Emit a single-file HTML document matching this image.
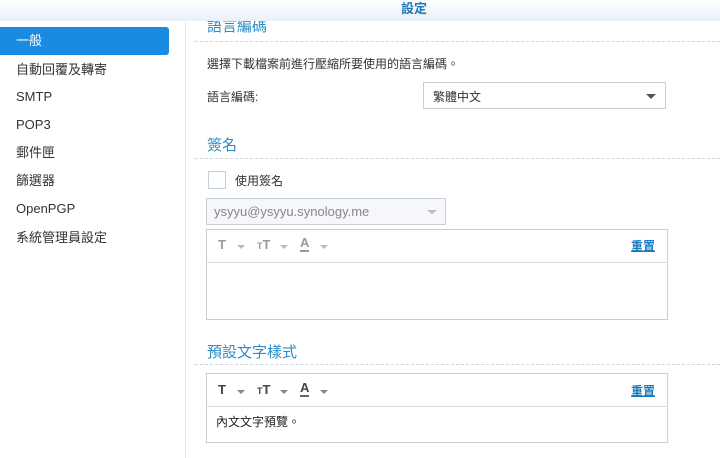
<!DOCTYPE html>
<html><head><meta charset="utf-8"><style>
*{margin:0;padding:0;box-sizing:border-box}
body{width:720px;height:458px;overflow:hidden;background:#fff;font-family:"Liberation Sans","Noto Sans CJK TC",sans-serif;font-size:13px;color:#333;position:relative}
.a{position:absolute;white-space:nowrap}
.hdr{left:0;top:0;width:720px;height:21px;background:linear-gradient(#fff,#e8f1f9);z-index:2}
.side{left:16px;font-size:13px;color:#333;line-height:16px}
.h{color:#2b8dc4;font-size:15px;left:207px}
.dash{left:195px;width:525px;border-top:1px dashed #ccd6de;height:0}
.box{border:1px solid #c7d0d8;background:#fff}
.tb{font-size:13px;color:#555;font-weight:bold}
.arr{width:0;height:0;border-left:4px solid transparent;border-right:4px solid transparent;border-top:4px solid #888}
.rst{color:#1a7cc0;font-size:12px;text-decoration:underline;font-weight:bold}
</style></head><body>
<div class="a hdr"></div>
<div class="a" style="left:401px;top:-2px;color:#1f78b4;font-size:13px;font-weight:bold;z-index:3">設定</div>
<div class="a" style="left:185px;top:22px;width:1px;height:436px;background:#e3e8ec"></div>
<div class="a" style="left:0;top:27px;width:169px;height:28px;background:#1a8be0;border-radius:0 3px 3px 0"></div>
<div class="a side" style="top:33px;color:#fff">一般</div>
<div class="a side" style="top:62px">自動回覆及轉寄</div>
<div class="a side" style="top:89px">SMTP</div>
<div class="a side" style="top:117px">POP3</div>
<div class="a side" style="top:145px">郵件匣</div>
<div class="a side" style="top:173px">篩選器</div>
<div class="a side" style="top:201px">OpenPGP</div>
<div class="a side" style="top:230px">系統管理員設定</div>

<div class="a h" style="top:15px">語言編碼</div>
<div class="a dash" style="top:41px"></div>
<div class="a" style="left:207px;top:55px;font-size:12px">選擇下載檔案前進行壓縮所要使用的語言編碼。</div>
<div class="a" style="left:207px;top:88px;font-size:12px">語言編碼:</div>
<div class="a box" style="left:423px;top:82px;width:243px;height:27px"></div>
<div class="a" style="left:433px;top:88px;font-size:12px">繁體中文</div>
<div class="a arr" style="left:646px;top:94px;border-top-color:#555;border-left-width:5px;border-right-width:5px;border-top-width:5px"></div>

<div class="a h" style="top:134px">簽名</div>
<div class="a dash" style="top:158px"></div>
<div class="a box" style="left:208px;top:171px;width:18px;height:18px"></div>
<div class="a" style="left:235px;top:172px;font-size:12px">使用簽名</div>
<div class="a box" style="left:206px;top:198px;width:240px;height:27px;background:#f5f7fa"></div>
<div class="a" style="left:214px;top:204px;font-size:13px;color:#888">ysyyu@ysyyu.synology.me</div>
<div class="a arr" style="left:427px;top:210px;border-top-color:#bbb;border-left-width:5px;border-right-width:5px"></div>

<div class="a box" style="left:206px;top:229px;width:462px;height:91px"></div>
<div class="a" style="left:206px;top:262px;width:462px;height:1px;background:#d5dbe0"></div>
<div class="a tb" style="left:218px;top:237px;color:#999">T</div>
<div class="a arr" style="left:237px;top:245px;border-top-color:#bbb"></div>
<div class="a tb" style="left:257px;top:237px;color:#999"><span style="font-size:9px">T</span>T</div>
<div class="a arr" style="left:280px;top:245px;border-top-color:#bbb"></div>
<div class="a tb" style="left:300px;top:236px;color:#999;border-bottom:2px solid #999;line-height:14px">A</div>
<div class="a arr" style="left:320px;top:245px;border-top-color:#bbb"></div>
<div class="a rst" style="left:631px;top:237px">重置</div>

<div class="a h" style="top:341px">預設文字樣式</div>
<div class="a dash" style="top:364px"></div>
<div class="a box" style="left:206px;top:373px;width:462px;height:70px"></div>
<div class="a" style="left:206px;top:406px;width:462px;height:1px;background:#d5dbe0"></div>
<div class="a tb" style="left:218px;top:382px;color:#444">T</div>
<div class="a arr" style="left:237px;top:390px"></div>
<div class="a tb" style="left:257px;top:382px;color:#444"><span style="font-size:9px">T</span>T</div>
<div class="a arr" style="left:280px;top:390px"></div>
<div class="a tb" style="left:300px;top:381px;color:#444;border-bottom:2px solid #666;line-height:14px">A</div>
<div class="a arr" style="left:320px;top:390px"></div>
<div class="a rst" style="left:631px;top:382px">重置</div>
<div class="a" style="left:216px;top:413px;font-size:12px;color:#222">內文文字預覽。</div>
</body></html>
